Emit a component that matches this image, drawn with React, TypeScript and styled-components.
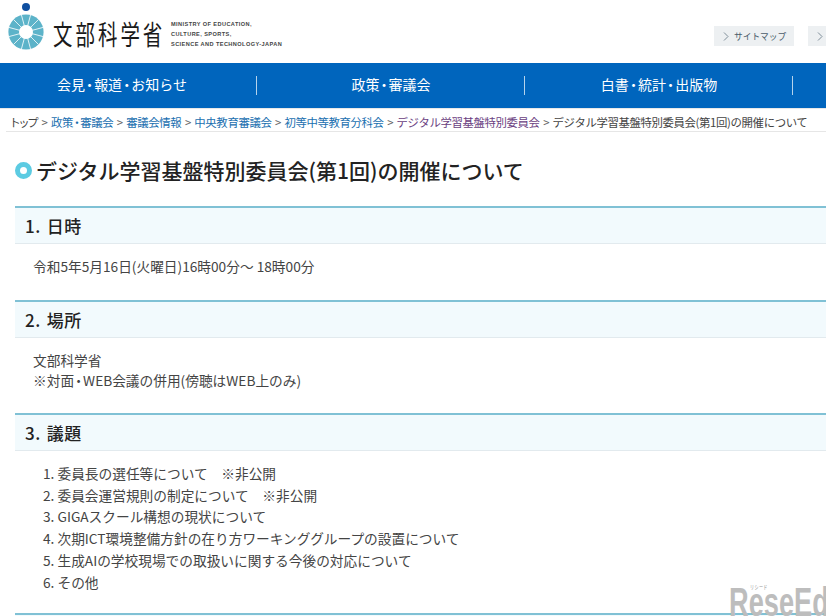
import React from "react"
import styled, { createGlobalStyle } from "styled-components"

const GlobalStyle = createGlobalStyle`
    html, body {
        margin: 0;
        padding: 0;
        background: #fff;
        overflow: hidden;
    }
    body {
        font-family: "Noto Sans CJK JP", "Noto Sans", sans-serif;
        color: #333;
    }
`

const Page = styled.div`
    position: relative;
    width: 826px;
    height: 616px;
    overflow: hidden;
`

const Header = styled.header`
    height: 63px;
    display: flex;
    align-items: flex-start;
    justify-content: space-between;
`

const Logo = styled.div`
    display: flex;
    align-items: center;
    padding: 3px 0 0 8px;
`

const LogoName = styled.div`
    margin-left: 9px;
    margin-right: -38px;
    margin-top: 13px;
    font-size: 27px;
    line-height: 32px;
    letter-spacing: 4.2px;
    color: #1a1a1a;
    white-space: nowrap;
    transform: scaleX(0.72);
    transform-origin: left center;
`

const LogoEnglish = styled.div`
    margin-top: 16px;
    font-family: "Liberation Sans", sans-serif;
    font-size: 5.6px;
    font-weight: 700;
    line-height: 9.8px;
    letter-spacing: 0.42px;
    color: #444;
    white-space: nowrap;
`

const HeaderLinks = styled.div`
    display: flex;
    gap: 14px;
    margin-top: 26px;
    margin-right: -1px;
`

const HeaderLink = styled.a<{ $narrow?: boolean }>`
    display: flex;
    align-items: center;
    gap: 5px;
    box-sizing: border-box;
    width: ${p => (p.$narrow ? "19px" : "80px")};
    height: 20px;
    padding-left: 9px;
    background: #edf0f2;
    font-size: 8.7px;
    color: #4a5c6a;
    white-space: nowrap;
`

const Nav = styled.nav`
    height: 45px;
    display: grid;
    grid-template-columns: 257px 268px 268px 33px;
    background: #0065bd;
    border-bottom: 1px solid #e8e8e8;
`

const NavItem = styled.a`
    position: relative;
    display: flex;
    align-items: center;
    justify-content: center;
    padding-bottom: 3px;
    font-size: 14px;
    color: #fff;
    white-space: nowrap;

    &:first-child {
        padding-right: 13px;
    }

    &::after {
        content: "";
        position: absolute;
        right: 0;
        top: 13px;
        height: 19px;
        width: 1px;
        background: #b5d3ec;
    }
`

// 中黒は元の画面のフォントでは幅が狭い
const Dot = styled.span`
    font-feature-settings: "palt";
    padding: 0 0.08em;
`

const Breadcrumb = styled.div`
    height: 19px;
    margin-left: 6px;
    padding: 3px 0 0 5px;
    display: flex;
    align-items: center;
    border-bottom: 1px solid #e6e6e6;
    font-size: 11.4px;
    letter-spacing: -0.37px;
    color: #444;
    white-space: nowrap;
`

const Crumb = styled.a<{ $visited?: boolean }>`
    color: ${p => (p.$visited ? "#6b3f82" : "#1a6fb0")};
`

const Home = styled.span`
    font-feature-settings: "palt";
`

const Sep = styled.span`
    margin: 0 3.5px;
    color: #666;
`

const Title = styled.h1`
    display: flex;
    align-items: center;
    gap: 4px;
    margin: 24px 0 22px 15px;
    font-size: 21px;
    line-height: 28px;
    font-weight: 500;
    color: #222;
    white-space: nowrap;
`

const TitleMark = styled.span`
    width: 7px;
    height: 7px;
    border: 5px solid #5ccbe2;
    border-radius: 50%;
    background: #fff;
    flex: none;
`

const Section = styled.section`
    margin-left: 15px;
`

const SectionHeading = styled.h2`
    box-sizing: border-box;
    height: 38px;
    margin: 0;
    padding-left: 10px;
    display: flex;
    align-items: center;
    gap: 6px;
    background: #f2fafd;
    border-top: 2px solid #80c1d5;
    border-bottom: 1px solid #e2eaee;
    font-size: 17px;
    font-weight: 500;
    letter-spacing: 0.5px;
    color: #222;
`

const Body = styled.div<{ $height: number }>`
    height: ${p => p.$height}px;
    padding: 12px 0 0 18px;
    box-sizing: border-box;
    font-size: 13.7px;
    line-height: 20px;
    color: #444;
`

const AgendaList = styled.ol`
    margin: 0;
    padding: 0 0 0 10px;
    list-style: none;
    line-height: 21.7px;
`

const Watermark = styled.div`
    position: absolute;
    left: 729px;
    bottom: -4px;
    font-family: "Liberation Sans", sans-serif;
    font-size: 40px;
    font-weight: 700;
    line-height: 36px;
    color: #bdbdbd;
    white-space: nowrap;
    transform: scaleX(0.68);
    transform-origin: left bottom;
`

const WatermarkKana = styled.span`
    position: absolute;
    left: 31px;
    top: -1px;
    font-family: "Noto Sans CJK JP", sans-serif;
    font-size: 6px;
    line-height: 8px;
    font-weight: 400;
    letter-spacing: 0.5px;
    color: #999;
`

// 文科省のシンボル: 青い丸と、光線で区切られた水色の円
const LogoMark = () => {
    const rays = Array.from({ length: 12 }, (_, i) => (i * 360) / 12 + 15)
    return (
        <svg width="36" height="48" viewBox="0 0 36 48">
            <circle cx="18" cy="4" r="4" fill="#0f4fa0" />
            <circle cx="18" cy="29" r="17.6" fill="#5cb3c9" />
            {rays.map(a => (
                <line key={a} x1="18" y1="29" x2="18" y2="11" stroke="#e4f3f7" strokeWidth="0.9" transform={`rotate(${a} 18 29)`} />
            ))}
            <circle cx="18" cy="29" r="7" fill="#fff" />
        </svg>
    )
}

const Chevron = () => (
    <svg width="6" height="9" viewBox="0 0 6 9" style={{ flex: "none" }}>
        <path d="M1 .5 5 4.5 1 8.5" fill="none" stroke="#7f8d98" strokeWidth="1" />
    </svg>
)

const crumbs = [
    <>政策<Dot>・</Dot>審議会</>,
    <>審議会情報</>,
    <>中央教育審議会</>,
    <>初等中等教育分科会</>,
]

const agenda = [
    "1. 委員長の選任等について　※非公開",
    "2. 委員会運営規則の制定について　※非公開",
    "3. GIGAスクール構想の現状について",
    "4. 次期ICT環境整備方針の在り方ワーキンググループの設置について",
    "5. 生成AIの学校現場での取扱いに関する今後の対応について",
    "6. その他",
]

const App = () => (
    <Page>
        <GlobalStyle />

        <Header>
            <Logo>
                <LogoMark />
                <LogoName>文部科学省</LogoName>
                <LogoEnglish>
                    MINISTRY OF EDUCATION,<br />
                    CULTURE, SPORTS,<br />
                    SCIENCE AND TECHNOLOGY-JAPAN
                </LogoEnglish>
            </Logo>
            <HeaderLinks>
                <HeaderLink><Chevron />サイトマップ</HeaderLink>
                <HeaderLink $narrow><Chevron /></HeaderLink>
            </HeaderLinks>
        </Header>

        <Nav>
            <NavItem>会見<Dot>・</Dot>報道<Dot>・</Dot>お知らせ</NavItem>
            <NavItem>政策<Dot>・</Dot>審議会</NavItem>
            <NavItem>白書<Dot>・</Dot>統計<Dot>・</Dot>出版物</NavItem>
        </Nav>

        <Breadcrumb>
            <Home>トップ</Home><Sep>&gt;</Sep>
            {crumbs.map((c, i) => (
                <React.Fragment key={i}>
                    <Crumb>{c}</Crumb><Sep>&gt;</Sep>
                </React.Fragment>
            ))}
            <Crumb $visited>デジタル学習基盤特別委員会</Crumb><Sep>&gt;</Sep>
            デジタル学習基盤特別委員会(第1回)の開催について
        </Breadcrumb>

        <Title>
            <TitleMark />
            デジタル学習基盤特別委員会(第1回)の開催について
        </Title>

        <Section>
            <SectionHeading><span>1.</span>日時</SectionHeading>
            <Body $height={56}>令和5年5月16日(火曜日)16時00分～ 18時00分</Body>
        </Section>

        <Section>
            <SectionHeading><span>2.</span>場所</SectionHeading>
            <Body $height={75}>
                文部科学省<br />
                ※対面<Dot>・</Dot>WEB会議の併用(傍聴はWEB上のみ)
            </Body>
        </Section>

        <Section>
            <SectionHeading><span>3.</span>議題</SectionHeading>
            <Body $height={162}>
                <AgendaList>
                    {agenda.map(item => <li key={item}>{item}</li>)}
                </AgendaList>
            </Body>
        </Section>

        <Section>
            <SectionHeading />
        </Section>

        <Watermark>
            <WatermarkKana>リシード</WatermarkKana>
            ReseEd
        </Watermark>
    </Page>
)

export default App
